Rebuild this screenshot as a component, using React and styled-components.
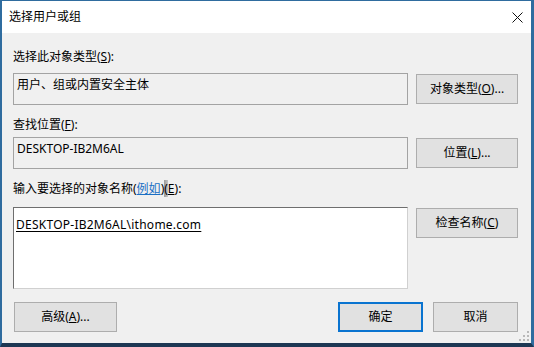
import React from "react";
import styled, { createGlobalStyle } from "styled-components";

const Global = createGlobalStyle`
  html, body { margin: 0; padding: 0; background: #fff; }
  body { font-family: "Noto Sans", "Noto Sans CJK SC", sans-serif; font-size: 12px; color: #000; }
  * { box-sizing: border-box; }
`;

const Window = styled.div`
  position: relative;
  width: 534px;
  height: 347px;
  display: flex;
  flex-direction: column;
  border-style: solid;
  border-width: 1px 3px 4px 2px;
  border-color: #2f6c9f #2f6c9f #1d3753 #2f6c9f;
  background: #f0f0f0;
`;

const TitleBar = styled.div`
  height: 32px;
  flex: none;
  background: #fff;
  display: flex;
  align-items: center;
  justify-content: space-between;
  padding: 0 0 0 7px;
  line-height: 16px;
`;

const CloseBox = styled.div`
  width: 28px;
  height: 30px;
  display: flex;
  align-items: center;
  justify-content: center;
`;

const Body = styled.div`
  flex: 1;
  display: flex;
  flex-direction: column;
  padding: 16px 13px 0 11px;
`;

const Label = styled.div`
  line-height: 16px;
  height: 16px;
  white-space: nowrap;
  margin-bottom: ${(p) => p.$gap}px;
`;

const Row = styled.div`
  display: flex;
  align-items: flex-start;
  gap: 8px;
  margin-bottom: ${(p) => p.$gap || 0}px;
`;

const Field = styled.div`
  width: 395px;
  height: 32px;
  border: 1px solid #a3a3a3;
  background: #f0f0f0;
  padding: 3px 3px;
  line-height: 16px;
  white-space: nowrap;
`;

const Memo = styled.div`
  width: 395px;
  height: 82px;
  border: 1px solid;
  border-color: #6e6e6e #d0d0d0 #d0d0d0 #6e6e6e;
  background: #fff;
  padding: 9px 2px;
  line-height: 16px;
`;

const Resolved = styled.span`
  text-decoration: underline;
  text-underline-offset: 2px;
  letter-spacing: 0.25px;
`;

const Button = styled.button`
  flex: none;
  width: ${(p) => p.$w || 102}px;
  height: 30px;
  margin-top: ${(p) => p.$top || 0}px;
  font: inherit;
  color: #000;
  background: #e1e1e1;
  border: ${(p) => (p.$default ? "2px solid #0a74d0" : "1px solid #adadad")};
  padding: 0;
  line-height: 16px;
  cursor: default;
`;

const Footer = styled.div`
  display: flex;
  align-items: center;
  gap: 10px;
  padding-left: 1px;
`;

const Spacer = styled.div`
  flex: 1;
`;

const Link = styled.a`
  color: #1a6fc4;
  text-decoration: underline;
`;

const Caret = styled.span`
  background: linear-gradient(90deg, #9a9a9a, #c4c4c4);
`;

const Grip = styled.svg`
  position: absolute;
  right: 1px;
  bottom: 1px;
`;

const Acc = ({ k }) => <u>{k}</u>;

export default function App() {
  return (
    <>
      <Global />
      <Window>
        <TitleBar>
          <span>选择用户或组</span>
          <CloseBox>
            <svg width="11" height="11" viewBox="0 0 11 11">
              <path d="M0.5 0.5L10.5 10.5M10.5 0.5L0.5 10.5" stroke="#111" strokeWidth="1" fill="none" />
            </svg>
          </CloseBox>
        </TitleBar>
        <Body>
          <Label $gap={8}>
            选择此对象类型(<Acc k="S" />):
          </Label>
          <Row $gap={12}>
            <Field>用户、组或内置安全主体</Field>
            <Button $top={1}>
              对象类型(<Acc k="O" />)...
            </Button>
          </Row>
          <Label $gap={4}>
            查找位置(<Acc k="F" />):
          </Label>
          <Row $gap={12}>
            <Field>DESKTOP-IB2M6AL</Field>
            <Button $top={1}>
              位置(<Acc k="L" />)...
            </Button>
          </Row>
          <Label $gap={10}>
            输入要选择的对象名称(<Link>例如</Link>)<Caret>(</Caret>
            <Acc k="E" />):
          </Label>
          <Row $gap={13}>
            <Memo>
              <Resolved>DESKTOP-IB2M6AL\ithome.com</Resolved>
            </Memo>
            <Button $top={1}>
              检查名称(<Acc k="C" />)
            </Button>
          </Row>
          <Footer>
            <Button $w={103}>
              高级(<Acc k="A" />)...
            </Button>
            <Spacer />
            <Button $w={85} $default>
              确定
            </Button>
            <Button $w={85}>取消</Button>
          </Footer>
        </Body>
        <Grip width="12" height="12" viewBox="0 0 12 12">
          <g fill="#b8b8b8">
            <rect x="9" y="1" width="2" height="2" />
            <rect x="5" y="5" width="2" height="2" />
            <rect x="9" y="5" width="2" height="2" />
            <rect x="1" y="9" width="2" height="2" />
            <rect x="5" y="9" width="2" height="2" />
            <rect x="9" y="9" width="2" height="2" />
          </g>
        </Grip>
      </Window>
    </>
  );
}
